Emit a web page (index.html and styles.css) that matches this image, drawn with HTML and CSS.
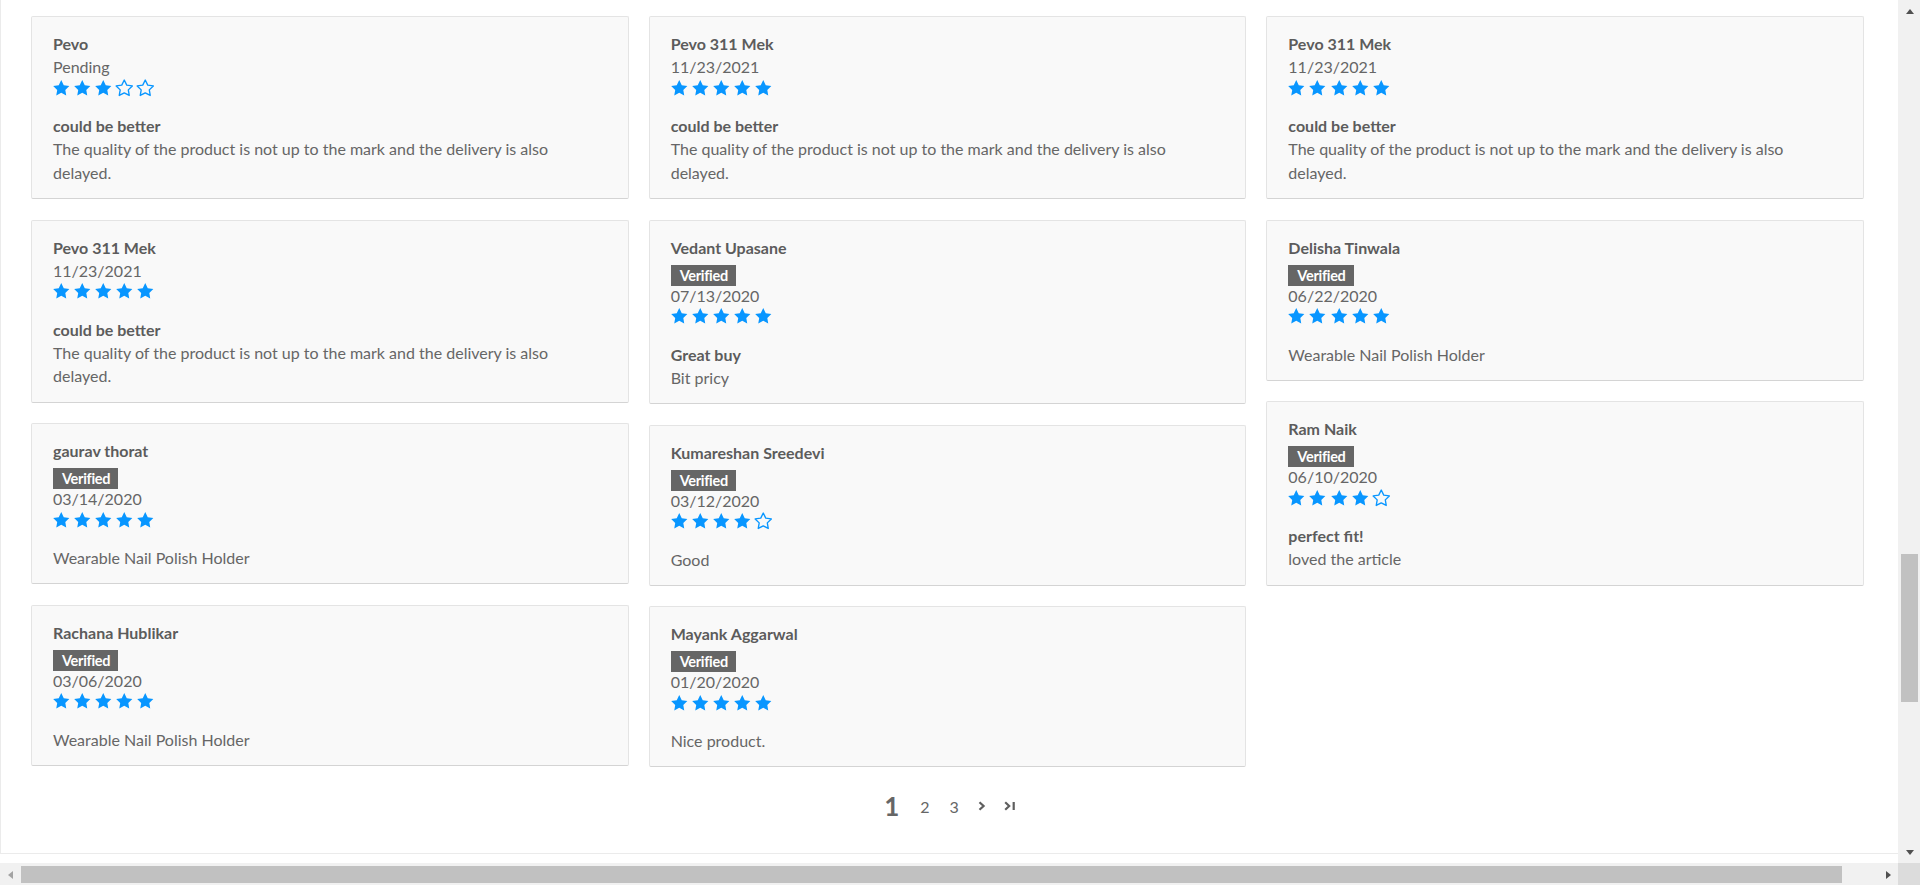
FILE: index.html
```html
<!DOCTYPE html>
<html lang="en">
<head>
<meta charset="utf-8">
<title>Reviews</title>
<link rel="stylesheet" href="styles.css">
</head>
<body>
<svg class="defs" width="0" height="0" aria-hidden="true">
  <defs>
    <path id="starp" d="M12 0.5 L15.53 7.65 L23.41 8.79 L17.71 14.35 L19.05 22.21 L12 18.5 L4.95 22.21 L6.29 14.35 L0.59 8.79 L8.47 7.65 Z"/>
  </defs>
</svg>
<div class="screen">
  <div class="page">
    <div class="frame">
      <div class="reviews">
        <div class="col">
          <div class="card">
            <div class="name">Pevo</div>
            <div class="meta">Pending</div>
            <div class="stars"><svg class="star" viewBox="0.5 0.4 23 22"><use href="#starp"/></svg><svg class="star" viewBox="0.5 0.4 23 22"><use href="#starp"/></svg><svg class="star" viewBox="0.5 0.4 23 22"><use href="#starp"/></svg><svg class="star o" viewBox="0.5 0.4 23 22"><use href="#starp"/></svg><svg class="star o" viewBox="0.5 0.4 23 22"><use href="#starp"/></svg></div>
            <div class="title">could be better</div>
            <div class="body">The quality of the product is not up to the mark and the delivery is also delayed.</div>
          </div>
          <div class="card">
            <div class="name">Pevo 311 Mek</div>
            <div class="meta">11/23/2021</div>
            <div class="stars"><svg class="star" viewBox="0.5 0.4 23 22"><use href="#starp"/></svg><svg class="star" viewBox="0.5 0.4 23 22"><use href="#starp"/></svg><svg class="star" viewBox="0.5 0.4 23 22"><use href="#starp"/></svg><svg class="star" viewBox="0.5 0.4 23 22"><use href="#starp"/></svg><svg class="star" viewBox="0.5 0.4 23 22"><use href="#starp"/></svg></div>
            <div class="title">could be better</div>
            <div class="body">The quality of the product is not up to the mark and the delivery is also delayed.</div>
          </div>
          <div class="card">
            <div class="name">gaurav thorat</div>
            <div class="badge-row"><span class="badge">Verified</span></div>
            <div class="meta">03/14/2020</div>
            <div class="stars"><svg class="star" viewBox="0.5 0.4 23 22"><use href="#starp"/></svg><svg class="star" viewBox="0.5 0.4 23 22"><use href="#starp"/></svg><svg class="star" viewBox="0.5 0.4 23 22"><use href="#starp"/></svg><svg class="star" viewBox="0.5 0.4 23 22"><use href="#starp"/></svg><svg class="star" viewBox="0.5 0.4 23 22"><use href="#starp"/></svg></div>
            <div class="body solo">Wearable Nail Polish Holder</div>
          </div>
          <div class="card">
            <div class="name">Rachana Hublikar</div>
            <div class="badge-row"><span class="badge">Verified</span></div>
            <div class="meta">03/06/2020</div>
            <div class="stars"><svg class="star" viewBox="0.5 0.4 23 22"><use href="#starp"/></svg><svg class="star" viewBox="0.5 0.4 23 22"><use href="#starp"/></svg><svg class="star" viewBox="0.5 0.4 23 22"><use href="#starp"/></svg><svg class="star" viewBox="0.5 0.4 23 22"><use href="#starp"/></svg><svg class="star" viewBox="0.5 0.4 23 22"><use href="#starp"/></svg></div>
            <div class="body solo">Wearable Nail Polish Holder</div>
          </div>
        </div>
        <div class="col">
          <div class="card">
            <div class="name">Pevo 311 Mek</div>
            <div class="meta">11/23/2021</div>
            <div class="stars"><svg class="star" viewBox="0.5 0.4 23 22"><use href="#starp"/></svg><svg class="star" viewBox="0.5 0.4 23 22"><use href="#starp"/></svg><svg class="star" viewBox="0.5 0.4 23 22"><use href="#starp"/></svg><svg class="star" viewBox="0.5 0.4 23 22"><use href="#starp"/></svg><svg class="star" viewBox="0.5 0.4 23 22"><use href="#starp"/></svg></div>
            <div class="title">could be better</div>
            <div class="body">The quality of the product is not up to the mark and the delivery is also delayed.</div>
          </div>
          <div class="card">
            <div class="name">Vedant Upasane</div>
            <div class="badge-row"><span class="badge">Verified</span></div>
            <div class="meta">07/13/2020</div>
            <div class="stars"><svg class="star" viewBox="0.5 0.4 23 22"><use href="#starp"/></svg><svg class="star" viewBox="0.5 0.4 23 22"><use href="#starp"/></svg><svg class="star" viewBox="0.5 0.4 23 22"><use href="#starp"/></svg><svg class="star" viewBox="0.5 0.4 23 22"><use href="#starp"/></svg><svg class="star" viewBox="0.5 0.4 23 22"><use href="#starp"/></svg></div>
            <div class="title">Great buy</div>
            <div class="body">Bit pricy</div>
          </div>
          <div class="card">
            <div class="name">Kumareshan Sreedevi</div>
            <div class="badge-row"><span class="badge">Verified</span></div>
            <div class="meta">03/12/2020</div>
            <div class="stars"><svg class="star" viewBox="0.5 0.4 23 22"><use href="#starp"/></svg><svg class="star" viewBox="0.5 0.4 23 22"><use href="#starp"/></svg><svg class="star" viewBox="0.5 0.4 23 22"><use href="#starp"/></svg><svg class="star" viewBox="0.5 0.4 23 22"><use href="#starp"/></svg><svg class="star o" viewBox="0.5 0.4 23 22"><use href="#starp"/></svg></div>
            <div class="body solo">Good</div>
          </div>
          <div class="card">
            <div class="name">Mayank Aggarwal</div>
            <div class="badge-row"><span class="badge">Verified</span></div>
            <div class="meta">01/20/2020</div>
            <div class="stars"><svg class="star" viewBox="0.5 0.4 23 22"><use href="#starp"/></svg><svg class="star" viewBox="0.5 0.4 23 22"><use href="#starp"/></svg><svg class="star" viewBox="0.5 0.4 23 22"><use href="#starp"/></svg><svg class="star" viewBox="0.5 0.4 23 22"><use href="#starp"/></svg><svg class="star" viewBox="0.5 0.4 23 22"><use href="#starp"/></svg></div>
            <div class="body solo">Nice product.</div>
          </div>
        </div>
        <div class="col">
          <div class="card">
            <div class="name">Pevo 311 Mek</div>
            <div class="meta">11/23/2021</div>
            <div class="stars"><svg class="star" viewBox="0.5 0.4 23 22"><use href="#starp"/></svg><svg class="star" viewBox="0.5 0.4 23 22"><use href="#starp"/></svg><svg class="star" viewBox="0.5 0.4 23 22"><use href="#starp"/></svg><svg class="star" viewBox="0.5 0.4 23 22"><use href="#starp"/></svg><svg class="star" viewBox="0.5 0.4 23 22"><use href="#starp"/></svg></div>
            <div class="title">could be better</div>
            <div class="body">The quality of the product is not up to the mark and the delivery is also delayed.</div>
          </div>
          <div class="card">
            <div class="name">Delisha Tinwala</div>
            <div class="badge-row"><span class="badge">Verified</span></div>
            <div class="meta">06/22/2020</div>
            <div class="stars"><svg class="star" viewBox="0.5 0.4 23 22"><use href="#starp"/></svg><svg class="star" viewBox="0.5 0.4 23 22"><use href="#starp"/></svg><svg class="star" viewBox="0.5 0.4 23 22"><use href="#starp"/></svg><svg class="star" viewBox="0.5 0.4 23 22"><use href="#starp"/></svg><svg class="star" viewBox="0.5 0.4 23 22"><use href="#starp"/></svg></div>
            <div class="body solo">Wearable Nail Polish Holder</div>
          </div>
          <div class="card">
            <div class="name">Ram Naik</div>
            <div class="badge-row"><span class="badge">Verified</span></div>
            <div class="meta">06/10/2020</div>
            <div class="stars"><svg class="star" viewBox="0.5 0.4 23 22"><use href="#starp"/></svg><svg class="star" viewBox="0.5 0.4 23 22"><use href="#starp"/></svg><svg class="star" viewBox="0.5 0.4 23 22"><use href="#starp"/></svg><svg class="star" viewBox="0.5 0.4 23 22"><use href="#starp"/></svg><svg class="star o" viewBox="0.5 0.4 23 22"><use href="#starp"/></svg></div>
            <div class="title">perfect fit!</div>
            <div class="body">loved the article</div>
          </div>
        </div>
      </div>
      <nav class="pager">
        <span class="pg current">1</span>
        <span class="pg">2</span>
        <span class="pg">3</span>
        <span class="pg icon"><svg width="8" height="10" viewBox="0 0 8 10"><path d="M1.5 1.2 L5.6 5 L1.5 8.8" fill="none" stroke="#5f5f5f" stroke-width="2.2"/></svg></span>
        <span class="pg icon"><svg width="12" height="10" viewBox="0 0 12 10"><path d="M1.2 1.2 L5.2 5 L1.2 8.8" fill="none" stroke="#5f5f5f" stroke-width="2.2"/><rect x="8.6" y="1" width="2.2" height="8" fill="#5f5f5f"/></svg></span>
      </nav>
    </div>
  </div>
  <div class="vbar">
    <div class="sb-btn"><span class="tri up"></span></div>
    <div class="vtrack"><div class="vthumb"></div></div>
    <div class="sb-btn"><span class="tri down"></span></div>
  </div>
  <div class="hbar">
    <div class="sb-btn"><span class="tri left"></span></div>
    <div class="htrack"><div class="hthumb"></div></div>
    <div class="sb-btn"><span class="tri right"></span></div>
  </div>
  <div class="corner"></div>
</div>
</body>
</html>
```
FILE: styles.css
```css
* { box-sizing: border-box; }
html, body { margin: 0; padding: 0; background: #fff; }
body {
  width: 1920px;
  height: 885px;
  overflow: hidden;
  font-family: Lato, "Open Sans", Arial, sans-serif;
  color: #666;
}
.defs { position: absolute; width: 0; height: 0; overflow: hidden; }

.screen {
  display: grid;
  grid-template-columns: 1898px 22px;
  grid-template-rows: 863px 22px;
  width: 1920px;
  height: 885px;
}

/* page area */
.page {
  display: flex;
  flex-direction: column;
  padding-bottom: 9px;
  overflow: hidden;
}
.frame {
  flex: 1;
  border-left: 1px solid #ebebeb;
  border-bottom: 1px solid #ebebeb;
  padding: 16px 34px 0 30px;
  display: flex;
  flex-direction: column;
}
.reviews {
  display: flex;
  align-items: flex-start;
  gap: 20px;
}
.col {
  width: 598px;
  display: flex;
  flex-direction: column;
  gap: 20.5px;
}
.card {
  background: #f9f9f9;
  border: 1px solid #e4e4e4;
  border-bottom-color: #d4d4d4;
  border-radius: 2px;
  padding: 15px 30px 14px 21px;
  font-size: 16px;
  line-height: 23px;
}
.name {
  font-weight: 700;
  color: #5c5c5c;
}
.meta { color: #666; }
.badge-row {
  margin-top: 4px;
  height: 21px;
}
.badge {
  display: inline-block;
  background: #666;
  color: #fff;
  font-weight: 700;
  font-size: 14.5px;
  line-height: 21px;
  height: 21px;
  padding: 0 8px 0 9px;
  letter-spacing: -0.3px;
}
.stars {
  display: flex;
  gap: 4.6px;
  height: 22px;
  padding-top: 1.5px;
}
.star {
  width: 16.5px;
  height: 15.6px;
  fill: #0896ff;
  overflow: visible;
}
.star.o {
  fill: none;
  stroke: #0896ff;
  stroke-width: 1.9;
  stroke-linejoin: round;
}
.title {
  margin-top: 14px;
  font-weight: 700;
  color: #5c5c5c;
}
.body { color: #666; line-height: 23.5px; }
.body.solo { margin-top: 14px; line-height: 23px; }

/* pagination */
.pager {
  margin-top: 19px;
  height: 40px;
  display: flex;
  justify-content: center;
  align-items: center;
  padding-left: 4px;
}
.pg {
  font-size: 16px;
  color: #666;
  padding: 0 10px;
  display: flex;
  align-items: center;
}
.pg.current {
  font-size: 26px;
  font-weight: 700;
  color: #666;
  padding-right: 11px;
}
.pg.icon { padding: 0 9px; }

/* fake browser scrollbars */
.vbar {
  background: #f1f1f1;
  display: flex;
  flex-direction: column;
  padding: 3px 0 2px 3px;
  width: 22px;
}
.hbar {
  background: #f1f1f1;
  display: flex;
  flex-direction: row;
  padding: 3px 1px 2px 2px;
}
.sb-btn {
  flex: 0 0 17px;
  width: 17px;
  height: 17px;
  display: flex;
  align-items: center;
  justify-content: center;
}
.vtrack { flex: 1; }
.vthumb {
  margin-top: 534px;
  width: 17px;
  height: 148px;
  background: #c1c1c1;
}
.htrack { flex: 1; display: flex; }
.hthumb {
  margin-left: 2px;
  width: 1821px;
  height: 17px;
  background: #c1c1c1;
}
.tri { width: 0; height: 0; display: block; }
.tri.up { border-left: 4.5px solid transparent; border-right: 4.5px solid transparent; border-bottom: 5px solid #505050; }
.tri.down { border-left: 4.5px solid transparent; border-right: 4.5px solid transparent; border-top: 5px solid #505050; }
.tri.left { border-top: 4.5px solid transparent; border-bottom: 4.5px solid transparent; border-right: 5px solid #a3a3a3; }
.tri.right { border-top: 4.5px solid transparent; border-bottom: 4.5px solid transparent; border-left: 5px solid #505050; }
.corner { background: #dcdcdc; }
```
